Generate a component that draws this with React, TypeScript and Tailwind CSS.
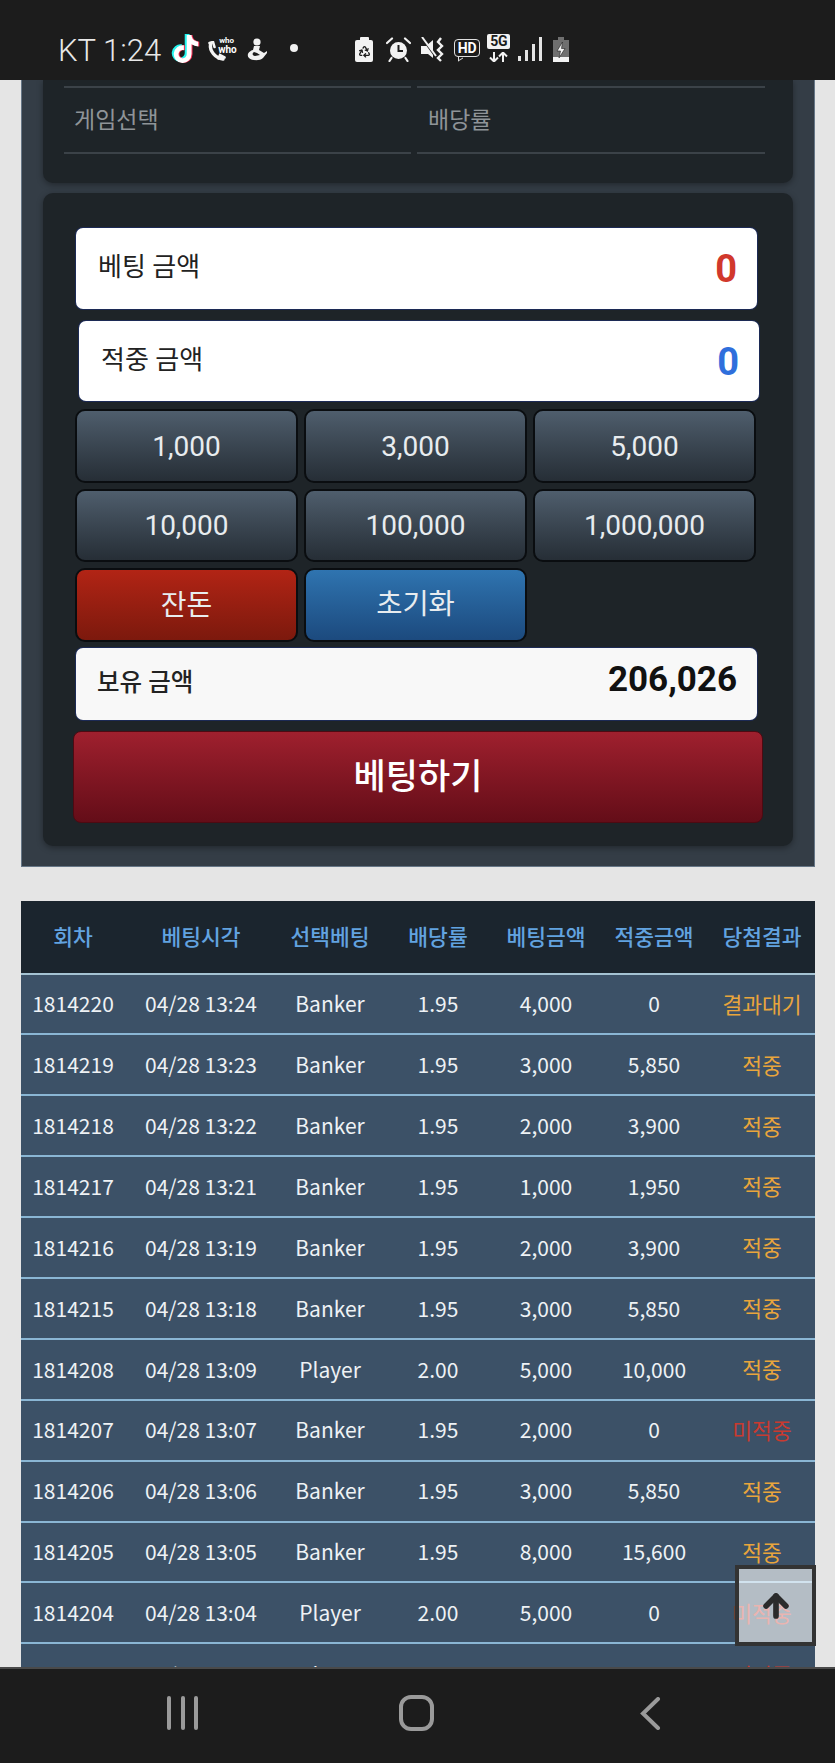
import { ArrowUp, Recycle } from "lucide-react";
import { FaTiktok } from "react-icons/fa";

const bets = [
  ["1814220", "04/28 13:24", "Banker", "1.95", "4,000", "0", "결과대기"],
  ["1814219", "04/28 13:23", "Banker", "1.95", "3,000", "5,850", "적중"],
  ["1814218", "04/28 13:22", "Banker", "1.95", "2,000", "3,900", "적중"],
  ["1814217", "04/28 13:21", "Banker", "1.95", "1,000", "1,950", "적중"],
  ["1814216", "04/28 13:19", "Banker", "1.95", "2,000", "3,900", "적중"],
  ["1814215", "04/28 13:18", "Banker", "1.95", "3,000", "5,850", "적중"],
  ["1814208", "04/28 13:09", "Player", "2.00", "5,000", "10,000", "적중"],
  ["1814207", "04/28 13:07", "Banker", "1.95", "2,000", "0", "미적중"],
  ["1814206", "04/28 13:06", "Banker", "1.95", "3,000", "5,850", "적중"],
  ["1814205", "04/28 13:05", "Banker", "1.95", "8,000", "15,600", "적중"],
  ["1814204", "04/28 13:04", "Player", "2.00", "5,000", "0", "미적중"],
  ["1814203", "04/28 13:03", "Player", "2.00", "5,000", "0", "미적중"],
];

const headers = ["회차", "베팅시각", "선택베팅", "배당률", "베팅금액", "적중금액", "당첨결과"];
const chips = ["1,000", "3,000", "5,000", "10,000", "100,000", "1,000,000"];

function StatusBar() {
  return (
    <div className="h-[80px] shrink-0 bg-[#1c1c1c] flex items-start text-[#e8e8e8]">
      <span className="ml-[58px] mt-[30px] text-[31px] leading-[42px] font-light whitespace-nowrap">KT 1:24</span>

      {/* tiktok */}
      <div className="relative ml-[11px] mt-[34px] w-[26px] h-[29px]">
        <FaTiktok className="absolute left-[-1px] top-[0px] w-[26px] h-[28px] text-[#25f4ee]" />
        <FaTiktok className="absolute left-[2px] top-[1px] w-[26px] h-[28px] text-[#fe2c55]" />
        <FaTiktok className="absolute left-[0.5px] top-[0.5px] w-[26px] h-[28px] text-white" />
      </div>

      {/* whowho */}
      <div className="relative ml-[9px] mt-[38px] w-[30px] h-[24px]">
        <svg className="absolute left-0 top-[3px]" width="19" height="21" viewBox="0 0 19 21" fill="none" stroke="#f4f4f4" strokeLinecap="round">
          <path d="M3.5 3 C2.5 10 8 17 16 18" strokeWidth="3.4" />
          <path d="M2.5 2 L6 1 L7.5 6 M11.5 17.5 L13 14 L17.5 16.5" strokeWidth="2.6" />
        </svg>
        <span className="absolute left-[12px] top-[-2px] text-[8px] leading-[10px] font-bold text-white">who</span>
        <span className="absolute left-[11px] top-[6px] text-[10px] leading-[11px] font-bold text-white">who</span>
      </div>

      {/* figure */}
      <svg className="ml-[9px] mt-[38px]" width="22" height="23" viewBox="0 0 22 23" fill="#f2f2f2">
        <circle cx="11" cy="4" r="3.6" />
        <path d="M8 8 L14 8 L13 12 L18 15 L21 13 L21 15 L17 20 C14 23 6 23 3 20 C0 17 3 13 7 12 Z" />
        <path d="M8 14 C6 15 6 18 9 18 L14 17 L11 15 Z" fill="#1c1c1c" />
      </svg>

      <div className="ml-[22px] mt-[44px] w-[8px] h-[8px] rounded-full bg-[#f0f0f0]" />

      {/* recycle battery */}
      <div className="relative ml-[57px] mt-[37px] w-[18px] h-[25px]">
        <div className="mx-auto w-[9px] h-[3px] rounded-t-[1px] bg-[#f2f2f2]" />
        <div className="w-[18px] h-[22px] rounded-[2px] bg-[#f2f2f2] flex items-center justify-center">
          <Recycle size={13} strokeWidth={2.4} className="text-[#1c1c1c]" />
        </div>
      </div>

      {/* alarm */}
      <svg className="ml-[13px] mt-[37px]" width="25" height="25" viewBox="0 0 25 25" fill="none" stroke="#f2f2f2">
        <circle cx="12.5" cy="13.5" r="8.5" fill="#f2f2f2" stroke="none" />
        <path d="M12.5 8 V14 H17" stroke="#1c1c1c" strokeWidth="2" />
        <path d="M1 6 L6 1.5 M24 6 L19 1.5 M5.5 21 L3.5 24 M19.5 21 L21.5 24" strokeWidth="2.2" strokeLinecap="round" />
      </svg>

      {/* mute + vibrate */}
      <svg className="ml-[10px] mt-[37px]" width="24" height="25" viewBox="0 0 24 25" fill="#f2f2f2">
        <path d="M0 9 H5 L12 3 V21 L7 17 H0 Z" />
        <path d="M1 1 L14 19" stroke="#1c1c1c" strokeWidth="2" />
        <path d="M1 0 L15 19" stroke="#f2f2f2" strokeWidth="2" />
        <path d="M20 1 L17 5 L21 9 L17 13 L21 17 L17 21 L20 24" fill="none" stroke="#f2f2f2" strokeWidth="2.4" />
      </svg>

      {/* hd */}
      <div className="relative ml-[9px] mt-[39px] w-[26px] h-[21px]">
        <div className="h-[18px] rounded-[4px] border-[1.5px] border-[#e0e0e0] flex items-center justify-center text-[14px] leading-none font-bold text-white">
          HD
        </div>
        <div className="absolute left-[4px] bottom-0 w-[5px] h-[5px] border-l-[1.5px] border-b-[1.5px] border-[#e0e0e0] -skew-y-[30deg]" />
      </div>

      {/* 5g */}
      <div className="ml-[7px] mt-[34px] w-[23px] flex flex-col items-center">
        <div className="w-[23px] h-[15px] rounded-[2px] bg-[#f2f2f2] text-[#1c1c1c] text-[14px] leading-[15px] font-bold text-center tracking-[-0.5px]">
          5G
        </div>
        <svg className="mt-[3px]" width="19" height="10" viewBox="0 0 19 10" fill="none" stroke="#f2f2f2" strokeWidth="2">
          <path d="M5 0 V9 M1 5.5 L5 9.5 L9 5.5 M14 10 V1 M10 4.5 L14 0.5 L18 4.5" />
        </svg>
      </div>

      {/* signal */}
      <div className="ml-[8px] mt-[37px] h-[24px] flex items-end gap-[4px]">
        <div className="w-[3px] h-[5px] bg-[#e4e4e4]" />
        <div className="w-[3px] h-[11px] bg-[#e4e4e4]" />
        <div className="w-[3px] h-[17px] bg-[#e4e4e4]" />
        <div className="w-[3px] h-[24px] bg-[#e4e4e4]" />
      </div>

      {/* charging battery */}
      <svg className="ml-[11px] mt-[37px]" width="16" height="25" viewBox="0 0 16 25">
        <path d="M5 0 H11 V3 H16 V25 H0 V3 H5 Z" fill="#6f6f6f" />
        <path d="M0 20 H16 V25 H0 Z" fill="#f2f2f2" />
        <path d="M9.5 5 L4 14 H7.5 L6 21 L12 11.5 H8.5 Z" fill="#f2f2f2" stroke="#1c1c1c" strokeWidth="0.6" />
      </svg>
    </div>
  );
}

function AmountRow({ label, value, color, className }: { label: string; value: string; color: string; className: string }) {
  return (
    <div className={`flex justify-between rounded-[7px] bg-white shadow-[0_0_0_1px_#1c2a55] pl-[22px] pr-[20px] ${className}`}>
      <span className="mt-[21px] text-[26px] leading-[36px] text-[#222]">{label}</span>
      <span className={`mt-[18px] text-[38px] leading-[46px] font-bold ${color}`}>{value}</span>
    </div>
  );
}

function Chip({ label, className }: { label: string; className: string }) {
  return (
    <button className={`h-[73.5px] pt-[2px] rounded-[10px] border-2 border-[#0a0d10] text-[#e8ecef] ${className}`}>
      {label}
    </button>
  );
}

export default function App() {
  return (
    <div
      className="relative w-[835px] h-[1763px] overflow-hidden flex flex-col bg-[#e5e5e5]"
      style={{ fontFamily: '"Roboto", "Noto Sans CJK KR", sans-serif' }}
    >
      <StatusBar />

      <main className="flex-1 min-h-0 overflow-hidden pl-[21px] pr-[20px]">
        {/* betting panel */}
        <section className="bg-[#343d46] border-x border-b border-[#667686] px-[21px] pb-[20px]">
          <div className="h-[103px] rounded-b-[10px] bg-[#1e2428] shadow-[0_2px_6px_rgba(0,0,0,0.35)] pl-[21px] pr-[28px] pt-[6px]">
            <div className="grid grid-cols-[347px_348px] gap-x-[6px]">
              <div className="h-[68px] pt-[2px] border-y-2 border-[#3b4248] pl-[10px] flex items-center text-[23px] text-[#8f9498]">
                게임선택
              </div>
              <div className="h-[68px] pt-[2px] border-y-2 border-[#3b4248] pl-[11px] flex items-center text-[23px] text-[#8f9498]">
                배당률
              </div>
            </div>
          </div>

          <div className="mt-[10px] rounded-[10px] bg-[#1e2428] shadow-[0_2px_6px_rgba(0,0,0,0.35)] pl-[33px] pt-[35px] pb-[23px]">
            <AmountRow label="베팅 금액" value="0" color="text-[#d1382c]" className="w-[681px] h-[81px]" />
            <AmountRow label="적중 금액" value="0" color="text-[#2f6fdc]" className="mt-[12px] ml-[3px] w-[680px] h-[80px]" />

            <div className="mt-[8px] -ml-[1px] w-[681px] grid grid-cols-3 gap-x-[6px] gap-y-[6px] text-[28px]">
              {chips.map((c) => (
                <Chip key={c} label={c} className="bg-gradient-to-b from-[#4f5e6d] to-[#262e36]" />
              ))}
              <Chip label="잔돈" className="text-[28px] bg-gradient-to-b from-[#b22415] to-[#7c190d]" />
              <Chip label="초기화" className="text-[28.5px] bg-gradient-to-b from-[#2f74b0] to-[#1c4a7e]" />
            </div>

            <div className="mt-[6px] w-[681px] h-[72px] rounded-[7px] bg-[#f8f8f8] shadow-[0_0_0_1px_#1c2a55] pl-[21px] pr-[20px] flex items-center justify-between">
              <span className="text-[24.5px] font-medium text-[#222]">보유 금액</span>
              <span className="text-[35px] font-bold text-[#111] mb-[6px]">206,026</span>
            </div>

            <button className="mt-[11px] -ml-[3px] w-[690px] h-[92px] pt-[3px] rounded-[8px] border border-[#4d0a12] bg-gradient-to-b from-[#9f202e] to-[#640d18] text-[35px] font-medium text-white">
              베팅하기
            </button>
          </div>
        </section>

        {/* history table */}
        <table
          className="mt-[34px] w-[794px] table-fixed border-collapse text-center text-[21px] text-[#eef2f5]"
          style={{ fontFamily: '"Noto Sans CJK KR", sans-serif' }}
        >
          <colgroup>
            <col className="w-[104px]" />
            <col className="w-[152px]" />
            <col className="w-[106px]" />
            <col className="w-[110px]" />
            <col className="w-[106px]" />
            <col className="w-[110px]" />
            <col className="w-[106px]" />
          </colgroup>
          <thead>
            <tr className="h-[73px] bg-[#1b252e] border-b-2 border-[#a5c3d3]">
              {headers.map((h) => (
                <th key={h} className="font-medium text-[21.5px] text-[#62a3e0]">
                  {h}
                </th>
              ))}
            </tr>
          </thead>
          <tbody>
            {bets.map((row) => (
              <tr key={row[0]} className="h-[60.9px] bg-[#3c5167] border-b-2 border-[#8ab6d4] last:[&>td]:pt-[2px]">
                {row.map((cell, i) => (
                  <td
                    key={i}
                    className={
                      i < 6
                        ? "whitespace-nowrap"
                        : cell === "미적중"
                          ? "whitespace-nowrap text-[21.5px] text-[#c93a30]"
                          : "whitespace-nowrap text-[21.5px] text-[#e9a53c]"
                    }
                  >
                    {cell}
                  </td>
                ))}
              </tr>
            ))}
          </tbody>
        </table>
      </main>

      {/* scroll to top */}
      <button className="absolute left-[735px] top-[1565px] w-[81px] h-[81px] border-[4px] border-[#333] bg-white/[0.62] flex items-center justify-center">
        <ArrowUp size={34} strokeWidth={4} className="text-[#2b2b2b]" />
      </button>

      {/* android nav */}
      <nav className="h-[96px] shrink-0 bg-[#1c1c1c] border-t-2 border-[#4a4a4a] flex items-start">
        <div className="ml-[167px] mt-[27px] flex gap-[9.5px]">
          <div className="w-[4px] h-[34px] rounded-full bg-[#9a9a9a]" />
          <div className="w-[4px] h-[34px] rounded-full bg-[#9a9a9a]" />
          <div className="w-[4px] h-[34px] rounded-full bg-[#9a9a9a]" />
        </div>
        <div className="ml-[201px] mt-[26px] w-[35px] h-[36px] rounded-[12px] border-[4px] border-[#9a9a9a]" />
        <svg className="ml-[206px] mt-[28px]" width="21" height="33" viewBox="0 0 21 33" fill="none" stroke="#9a9a9a" strokeWidth="4" strokeLinecap="round">
          <path d="M18 2 L3 16.5 L18 31" />
        </svg>
      </nav>
    </div>
  );
}
